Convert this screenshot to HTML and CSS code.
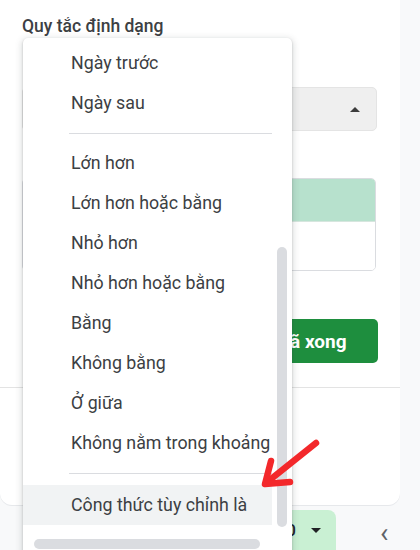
FILE: index.html
```html
<!DOCTYPE html>
<html lang="vi">
<head>
<meta charset="utf-8">
<link rel="stylesheet" href="styles.css">
</head>
<body>
<div class="app">
  <div class="top">
    <section class="panel">
      <div class="panel-body">
        <h2 class="title">Quy tắc định dạng</h2>
        <div class="select"><span class="caret-up"></span></div>
        <div class="preview">
          <div class="preview-top"></div>
          <div class="preview-bottom"></div>
        </div>
        <div class="actions">
          <button class="btn-done">Đã xong</button>
        </div>
      </div>
      <div class="panel-foot"></div>
    </section>
    <div class="strip"></div>
  </div>
  <footer class="bottombar">
    <div class="tab"><span class="tab-label">Trang tính 10</span><span class="caret-down"></span></div>
    <span class="chev">&lsaquo;</span>
  </footer>

  <div class="menu">
    <div class="menu-body">
      <ul class="menu-list">
        <li class="item">Ngày trước</li>
        <li class="item">Ngày sau</li>
        <li class="sep"></li>
        <li class="item">Lớn hơn</li>
        <li class="item">Lớn hơn hoặc bằng</li>
        <li class="item">Nhỏ hơn</li>
        <li class="item">Nhỏ hơn hoặc bằng</li>
        <li class="item">Bằng</li>
        <li class="item">Không bằng</li>
        <li class="item">Ở giữa</li>
        <li class="item">Không nằm trong khoảng</li>
        <li class="sep sep2"></li>
        <li class="item active">Công thức tùy chỉnh là</li>
      </ul>
      <div class="vtrack"><div class="vthumb"></div></div>
    </div>
    <div class="hthumb"></div>
  </div>

  <svg class="arrow" width="420" height="550" viewBox="0 0 420 550">
    <g stroke="#f3282b" stroke-width="6.5" stroke-linecap="round" stroke-linejoin="round" fill="none">
      <line x1="316" y1="443" x2="266" y2="483"/>
      <polyline points="271,461 265,484 290,482"/>
    </g>
  </svg>
</div>
</body>
</html>
```

FILE: styles.css
```css
* { box-sizing: border-box; }
html, body { margin: 0; padding: 0; }
body {
  width: 420px;
  height: 550px;
  overflow: hidden;
  background: #f8f9fa;
  font-family: Roboto, "Liberation Sans", Arial, sans-serif;
  color: #3c4043;
}
.app {
  position: relative;
  width: 420px;
  height: 550px;
  display: grid;
  grid-template-rows: 505px 45px;
}
.top {
  display: grid;
  grid-template-columns: 400px 20px;
}
.panel {
  background: #fff;
  border-radius: 0 0 12px 12px;
  display: flex;
  flex-direction: column;
  box-shadow: 0 1px 0 #e6e8eb;
}
.panel-body {
  padding: 16px 22px 24px 22px;
  display: flex;
  flex-direction: column;
  border-bottom: 1px solid #e3e3e3;
}
.title {
  margin: 0;
  font-size: 17.5px;
  line-height: 20px;
  font-weight: 500;
  color: #3c4043;
}
.select {
  margin-top: 51px;
  height: 44px;
  width: 355px;
  background: #efefef;
  border: 1px solid #e4e4e4;
  border-radius: 5px;
  display: flex;
  align-items: center;
  justify-content: flex-end;
  padding-right: 16px;
}
.caret-up {
  width: 0; height: 0;
  border-left: 5px solid transparent;
  border-right: 5px solid transparent;
  border-bottom: 5px solid #3c3c3c;
}
.preview {
  margin-top: 47px;
  width: 354px;
  height: 93px;
  border: 1px solid #dadce0;
  border-radius: 5px;
  overflow: hidden;
  display: flex;
  flex-direction: column;
}
.preview-top { height: 43px; background: #b7e1cd; border-bottom: 1px solid #d6e6de; }
.preview-bottom { flex: 1; background: #fff; }
.actions {
  margin-top: 48px;
  display: flex;
  justify-content: flex-end;
}
.btn-done {
  height: 44px;
  width: 132px;
  border: 0;
  border-radius: 5px;
  background: #1e8e3e;
  color: #fff;
  font-family: Roboto, "Liberation Sans", Arial, sans-serif;
  font-size: 19px;
  font-weight: 700;
  padding: 0;
}
.panel-foot { flex: 1; }
.strip { background: #f8f9fa; }

.bottombar {
  display: flex;
  align-items: flex-end;
  padding-top: 5px;
}
.tab {
  margin-left: 150px;
  width: 186px;
  height: 40px;
  background: #c9f0d3;
  border-radius: 0 8px 0 0;
  display: flex;
  align-items: center;
  justify-content: flex-end;
  gap: 15px;
  padding-right: 15px;
  font-size: 17px;
  font-weight: 500;
  color: #202124;
  white-space: nowrap;
}
.caret-down {
  flex: none;
  width: 0; height: 0;
  border-left: 5px solid transparent;
  border-right: 5px solid transparent;
  border-top: 5px solid #202124;
}
.chev {
  margin-left: 44px;
  align-self: center;
  font-size: 28px;
  line-height: 20px;
  color: #5f6368;
  margin-top: 6px;
}

.menu {
  position: absolute;
  left: 23px;
  top: 38px;
  width: 269px;
  height: 530px;
  background: #fff;
  border-radius: 5px;
  box-shadow: 0 2px 6px 2px rgba(60,64,67,.15), 0 1px 2px rgba(60,64,67,.3);
  display: flex;
  flex-direction: column;
  overflow: hidden;
}
.menu-body { display: flex; }
.menu-list {
  list-style: none;
  margin: 0;
  padding: 5px 0 0 0;
  width: 249px;
  flex: none;
}
.item {
  height: 40px;
  line-height: 40px;
  padding-left: 48px;
  font-size: 17.8px;
  color: #3c4043;
  white-space: nowrap;
}
.item.active { background: #f1f3f4; }
.sep {
  height: 1px;
  margin: 10px 0 9px 46px;
  background: #dadce0;
}
.sep2 { margin-top: 10px; margin-bottom: 11px; }
.vtrack {
  width: 20px;
  flex: none;
  padding: 209px 0 0 5px;
}
.vthumb {
  width: 10px;
  height: 280px;
  border-radius: 5px;
  background: #dadce0;
}
.hthumb {
  margin: 12px 0 0 11px;
  width: 226px;
  height: 10px;
  border-radius: 5px;
  background: #dadce0;
}
.arrow {
  position: absolute;
  left: 0; top: 0;
  pointer-events: none;
}
```
